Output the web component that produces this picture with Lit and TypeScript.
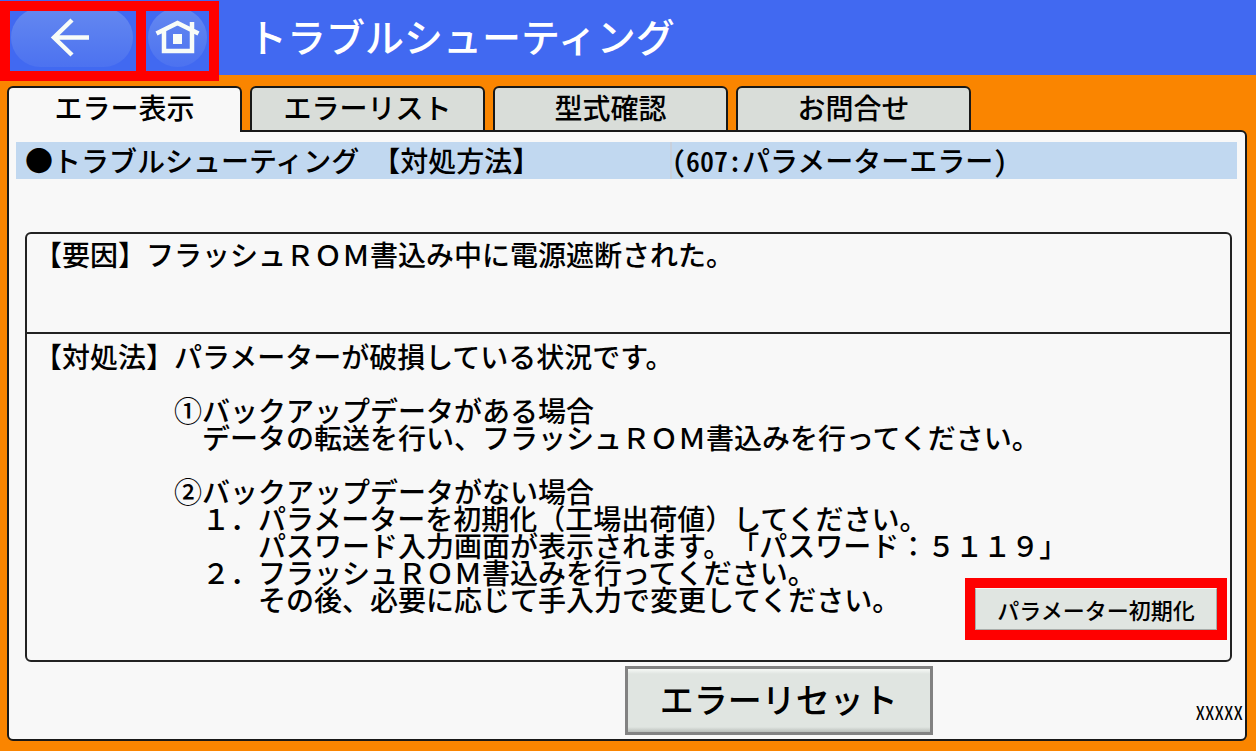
import { LitElement, html, css } from "lit";
import { customElement, state } from "lit/decorators.js";

const TABS = ["エラー表示", "エラーリスト", "型式確認", "お問合せ"];

const REMEDY = [
  "【対処法】パラメーターが破損している状況です。",
  "",
  "　　　　　①バックアップデータがある場合",
  "　　　　　　データの転送を行い、フラッシュＲＯＭ書込みを行ってください。",
  "",
  "　　　　　②バックアップデータがない場合",
  "　　　　　　１．パラメーターを初期化（工場出荷値）してください。",
  "　　　　　　　　パスワード入力画面が表示されます。「パスワード：５１１９」",
].join("\n");
const REMEDY_LAST = [
  "　　　　　　２．フラッシュＲＯＭ書込みを行ってください。",
  "　　　　　　　　その後、必要に応じて手入力で変更してください。",
].join("\n");

@customElement("app-root")
export class AppRoot extends LitElement {
  @state() private active = 0;

  static styles = css`
    :host {
      display: flex;
      flex-direction: column;
      box-sizing: border-box;
      min-height: 100vh;
      background: #fa8500;
      color: #000;
      font-family: "Noto Sans CJK JP", "Liberation Sans", sans-serif;
      font-size: 28px;
      font-weight: 500;
      text-spacing-trim: space-all;
    }
    * {
      box-sizing: border-box;
    }
    button {
      margin: 0;
      padding: 0;
      border: 0;
      font: inherit;
      color: inherit;
      cursor: pointer;
    }
    header {
      display: flex;
      height: 75px;
      padding-top: 1px;
      background: #4169f1;
      color: #fff;
    }
    .nav {
      display: flex;
      gap: 10px;
      height: 80px;
      padding: 10px;
      background: #f00;
      z-index: 1;
    }
    .nav button {
      display: flex;
      background: #4169f1;
    }
    .nav svg {
      display: block;
    }
    h1 {
      margin: 0;
      padding-left: 29px;
      font-size: 39px;
      font-weight: 500;
      line-height: 68px;
      white-space: nowrap;
    }
    .tabs {
      display: flex;
      gap: 8px;
      padding: 11px 8px 0 7px;
    }
    .tab {
      flex: 0 1 235px;
      height: 46px;
      padding-bottom: 4px;
      border: 2px solid #181818;
      border-radius: 6px 6px 0 0;
      background: #d9ddd9;
      line-height: 38px;
      white-space: nowrap;
    }
    .tab.active {
      padding-bottom: 6px;
      border-bottom: 0;
      background: #f8f8f8;
      z-index: 1;
    }
    main {
      flex: 1;
      display: flex;
      flex-direction: column;
      margin: -2px 9px 10px 7px;
      padding: 10px 8px 4px 7px;
      border: 2px solid #181818;
      border-radius: 6px;
      background: #f8f8f8;
    }
    main.first {
      border-top-left-radius: 0;
    }
    .bar {
      display: flex;
      height: 37px;
      background: #c1d8f0;
      line-height: 36px;
      white-space: nowrap;
    }
    .bar h2 {
      display: flex;
      gap: 13px;
      flex: 0 0 654px;
      margin: 0;
      padding-left: 9px;
      font: inherit;
    }
    .code {
      flex: 1;
      border-left: 2px solid #c8d0dc;
    }
    .half {
      font-feature-settings: "hwid";
    }
    .details {
      flex: 1;
      display: flex;
      flex-direction: column;
      margin: 53px 5px 0 9px;
      border: 2px solid #222;
      border-radius: 6px;
      line-height: 27px;
    }
    p {
      margin: 0;
      white-space: pre-wrap;
    }
    .cause {
      min-height: 100px;
      padding: 7px 0 0 7px;
      border-bottom: 2px solid #222;
    }
    .remedy {
      flex: 1;
      padding: 9px 3px 0 7px;
    }
    .last {
      display: flex;
      justify-content: space-between;
      align-items: flex-start;
    }
    .mark {
      margin-top: 19px;
      border: 10px solid #f00;
    }
    .init {
      display: block;
      width: 242px;
      height: 42px;
      border: 1px solid #a9adaa;
      border-top-color: #f4f8f4;
      background: #e0e5e1;
      font-size: 22px;
      line-height: 36px;
    }
    footer {
      display: grid;
      grid-template-columns: 2fr 308px 1fr;
      align-items: end;
      padding-top: 4px;
    }
    .reset {
      grid-column: 2;
      height: 69px;
      padding-bottom: 4px;
      border: 3px solid #828282;
      background: linear-gradient(#f6f9f6, #e0e5e1 5px, #e0e5e1 58px, #b9beba);
      font-size: 34px;
      line-height: 56px;
    }
    .version {
      justify-self: end;
      margin-right: -6px;
      padding-bottom: 8px;
      font-size: 19px;
      font-weight: 400;
      line-height: 30px;
    }
  `;

  render() {
    return html`
      <header>
        <nav class="nav">
          <button aria-label="戻る">
            <svg width="126" height="60" viewBox="0 0 126 60">
              <defs>
                <linearGradient id="g" x1="0" y1="0" x2="0" y2="1">
                  <stop offset="0" stop-color="#6488f0" />
                  <stop offset="1" stop-color="#4c72f0" />
                </linearGradient>
              </defs>
              <rect x="1" y="-3" width="122" height="59" rx="29.500" fill="url(#g)" />
              <path d="M62 9 44 26.500 62 44M44 26.500H79" fill="none" stroke="#f8fcf8" stroke-width="4.500" />
            </svg>
          </button>
          <button aria-label="ホーム">
            <svg width="63" height="60" viewBox="0 0 63 60">
              <defs>
                <linearGradient id="h" x1="0" y1="0" x2="0" y2="1">
                  <stop offset="0" stop-color="#6488f0" />
                  <stop offset="1" stop-color="#4c72f0" />
                </linearGradient>
              </defs>
              <circle cx="31.500" cy="26.500" r="29.500" fill="url(#h)" />
              <path d="M10.500 22.500 31.500 12 52.500 22.500M18 20V40H46V20M46 11V20" fill="none" stroke="#f8fcf8" stroke-width="4.500" />
              <rect x="27" y="23" width="9" height="10" fill="#f8fcf8" />
            </svg>
          </button>
        </nav>
        <h1>トラブルシューティング</h1>
      </header>
      <div class="tabs" role="tablist">
        ${TABS.map(
          (t, i) => html`<button
            class="tab ${i === this.active ? "active" : ""}"
            role="tab"
            aria-selected=${i === this.active}
            @click=${() => (this.active = i)}
          >${t}</button>`
        )}
      </div>
      <main class=${this.active === 0 ? "first" : ""}>
        <div class="bar">
          <h2><span>●トラブルシューティング</span><span>【対処方法】</span></h2>
          <div class="code"><span class="half">(607:</span>パラメーターエラー<span class="half">)</span></div>
        </div>
        <section class="details">
          <p class="cause">【要因】フラッシュＲＯＭ書込み中に電源遮断された。</p>
          <div class="remedy">
            <p>${REMEDY}</p>
            <div class="last">
              <p>${REMEDY_LAST}</p>
              <div class="mark"><button class="init">パラメーター初期化</button></div>
            </div>
          </div>
        </section>
        <footer>
          <button class="reset">エラーリセット</button>
          <span class="version half">XXXXX</span>
        </footer>
      </main>
    `;
  }
}
